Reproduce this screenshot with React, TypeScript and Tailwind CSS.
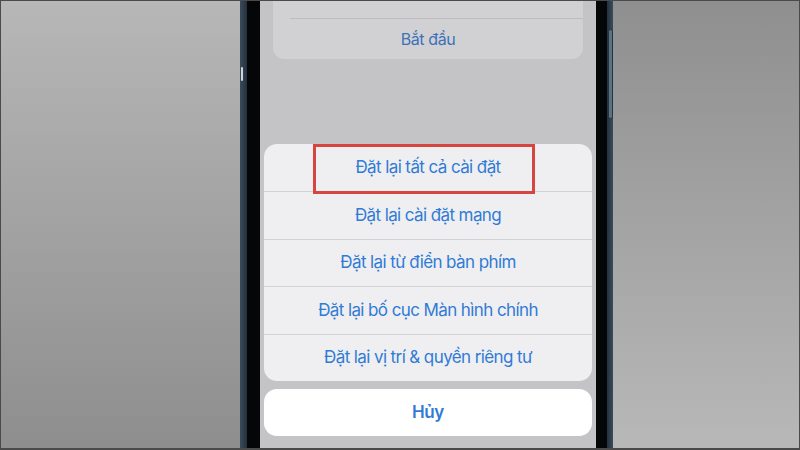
import React from 'react'

const options = [
  'Đặt lại tất cả cài đặt',
  'Đặt lại cài đặt mạng',
  'Đặt lại từ điển bàn phím',
  'Đặt lại bố cục Màn hình chính',
  'Đặt lại vị trí & quyền riêng tư',
]

function Bezel({ side }: { side: 'left' | 'right' }) {
  // metal edge of the phone, with the side button
  return (
    <div
      className={`relative h-full ${side === 'left' ? 'w-[7px] bg-gradient-to-r from-[#3a4b5b] to-[#24313d]' : 'w-[6px] bg-gradient-to-l from-[#3a4b5b] to-[#24313d]'}`}
    >
      {side === 'left' ? (
        <div className="absolute left-[1px] top-[66px] h-[14px] w-[2px] rounded-sm bg-[#cfd6dc]" />
      ) : (
        <div className="absolute right-0 top-[28px] h-[90px] w-[5px] rounded-sm border border-[#263440] bg-[#5b7184]" />
      )}
    </div>
  )
}

export default function App() {
  return (
    <div
      className="flex h-[450px] w-[800px] overflow-hidden border-x border-t border-b-2 border-[#4a4a4a]"
      style={{ fontFamily: 'Inter, "Noto Sans", sans-serif' }}
    >
      {/* background left */}
      <div className="h-full w-[239px] bg-gradient-to-b from-[#b7b7b7] to-[#8e8e8e]" />

      {/* phone */}
      <div className="flex h-full">
        <Bezel side="left" />
        <div className="h-full w-[13px] bg-[#050607]" />

        {/* screen */}
        <div className="flex h-full w-[336px] flex-col bg-[#c4c4c6]">
          {/* card behind the dim */}
          <div className="mx-[13px] flex h-[58px] flex-col rounded-b-[11px] bg-[#d1d1d3]">
            <div className="h-[17px]" />
            <div className="ml-[17px] h-px bg-[#bdbdc0]" />
            <div className="flex flex-1 items-center justify-center text-[16px] tracking-[-0.4px] text-[#3d72b8]">
              Bắt đầu
            </div>
          </div>

          {/* action sheet */}
          <div className="relative mx-[4px] mt-[84.5px] rounded-[13px] bg-[#efeff1]">
            {options.map((o, i) => (
              <div
                key={o}
                className={`flex h-[47.5px] items-center justify-center text-[17px] tracking-[-0.6px] text-[#2f7bd6] ${i > 0 ? 'border-t border-[#d3d3d6]' : ''}`}
              >
                {o}
              </div>
            ))}
            <div className="absolute left-[49px] top-[0.5px] h-[50px] w-[222px] border-[3px] border-[#d4463f]" />
          </div>

          <div className="mx-[4px] mt-[8px] flex h-[47px] items-center justify-center rounded-[13px] bg-white text-[17px] font-semibold tracking-[-0.4px] text-[#2f7bd6]">
            Hủy
          </div>
        </div>

        <div className="h-full w-[11px] bg-[#050607]" />
        <Bezel side="right" />
      </div>

      {/* background right */}
      <div className="h-full flex-1 bg-gradient-to-b from-[#8f8f8f] to-[#b8b8b8]" />
    </div>
  )
}
